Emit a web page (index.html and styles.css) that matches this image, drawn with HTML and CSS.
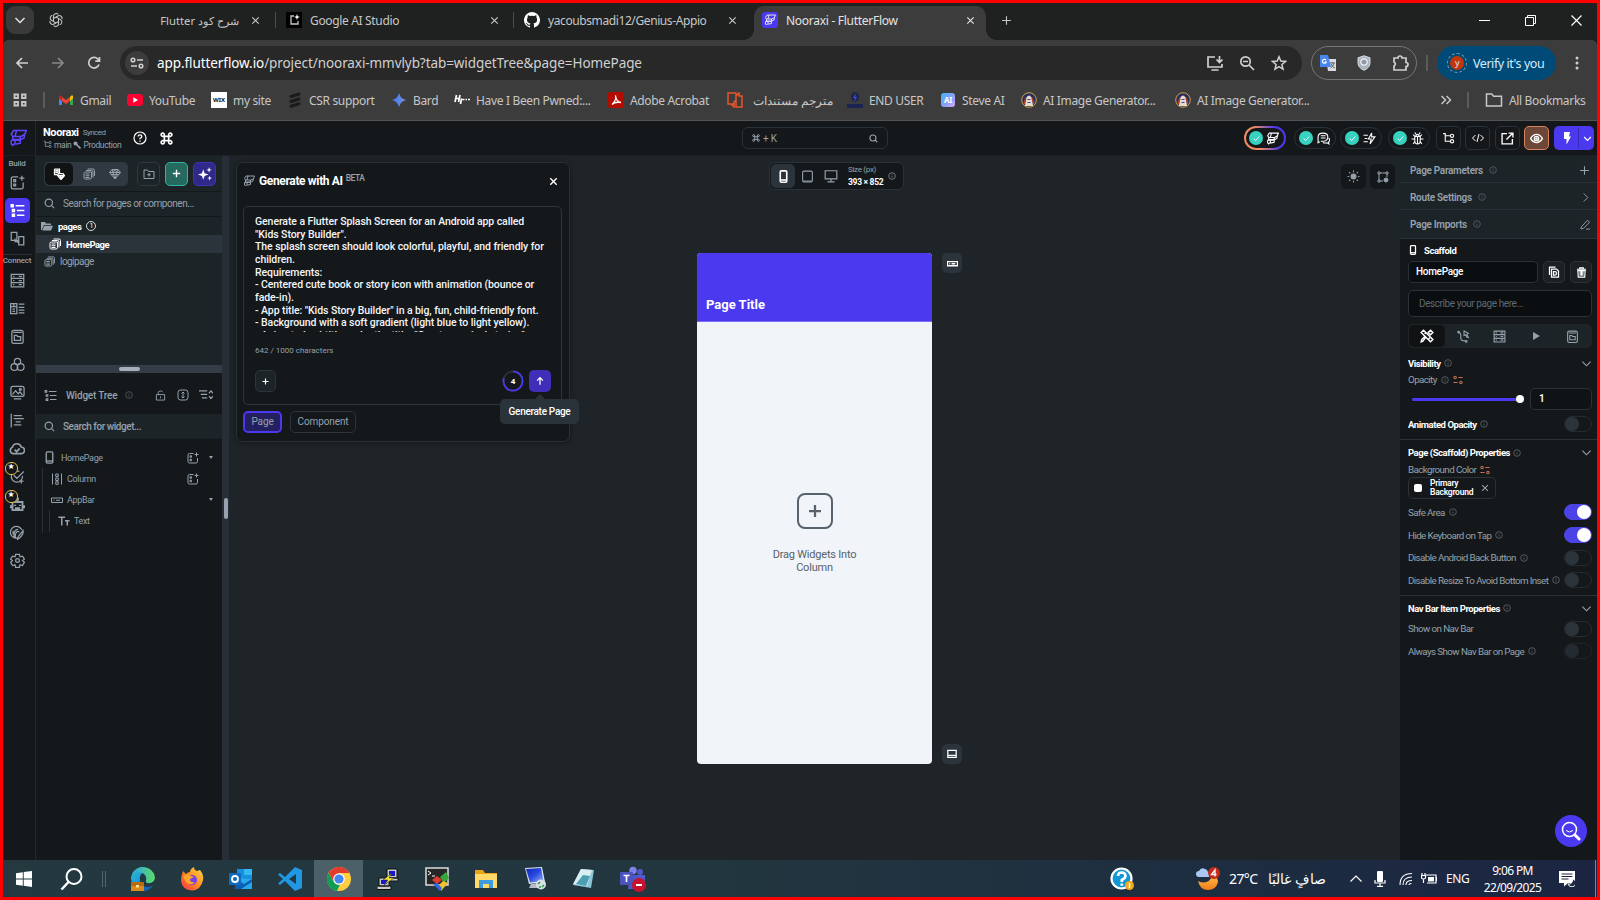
FILE: index.html
```html
<!DOCTYPE html>
<html lang="en">
<head>
<meta charset="utf-8">
<title>Nooraxi - FlutterFlow</title>
<link rel="stylesheet" href="styles.css">
</head>
<body>
<svg class="defs" width="0" height="0">
  <defs>
    <linearGradient id="gEdge" x1="0" y1="0" x2="1" y2="1"><stop offset="0" stop-color="#35c1b1"/><stop offset=".45" stop-color="#1b9de2"/><stop offset="1" stop-color="#0c59a4"/></linearGradient>
    <linearGradient id="gEdge2" x1="0" y1="0" x2="1" y2="0"><stop offset="0" stop-color="#2aa5e8"/><stop offset="1" stop-color="#5edb68"/></linearGradient>
    <linearGradient id="gFox" x1="1" y1="0" x2="0" y2="1"><stop offset="0" stop-color="#ffe14a"/><stop offset=".5" stop-color="#ff8a1e"/><stop offset="1" stop-color="#f0304f"/></linearGradient>
    <linearGradient id="gBard" x1="0" y1="0" x2="1" y2="0"><stop offset="0" stop-color="#3f7de8"/><stop offset="1" stop-color="#7d8ce0"/></linearGradient>
    <linearGradient id="gMoon" x1="0" y1="0" x2="0" y2="1"><stop offset="0" stop-color="#ffc445"/><stop offset="1" stop-color="#ee7a1c"/></linearGradient>
    <linearGradient id="gScreen" x1="0" y1="0" x2="1" y2="1"><stop offset="0" stop-color="#0d23b8"/><stop offset=".5" stop-color="#2a4be0"/><stop offset="1" stop-color="#9db8f5"/></linearGradient>
    <symbol id="close" viewBox="0 0 24 24"><path d="M5 5l14 14M19 5L5 19"/></symbol>
    <symbol id="plus" viewBox="0 0 24 24"><path d="M12 4v16M4 12h16"/></symbol>
    <symbol id="down" viewBox="0 0 24 24"><path d="M3 8l9 9 9-9"/></symbol>
    <symbol id="right" viewBox="0 0 24 24"><path d="M8 3l9 9-9 9"/></symbol>
    <symbol id="check" viewBox="0 0 24 24"><path d="M6 12.5l4 4L18 8"/></symbol>
    <symbol id="search" viewBox="0 0 24 24"><circle cx="10.500" cy="10.500" r="8"/><path d="M16 16l6 6"/></symbol>
    <symbol id="info" viewBox="0 0 24 24"><circle cx="12" cy="12" r="10"/><path d="M12 11v6M12 6.500v2"/></symbol>
    <symbol id="ff" viewBox="0 0 24 24"><path d="M3 7l3-5h17l-2 5-5 3H5zM5 10v4h11l4-2 1-5M3 15h12v4l-5 1H7M3 15v5l2 2 3-3v-4M10 2L8 10M15 10v4"/></symbol>
    <symbol id="branch" viewBox="0 0 24 24"><path d="M2 3h4v14h9M6 7h9"/><circle cx="18.500" cy="7" r="3"/><circle cx="18.500" cy="17" r="3"/></symbol>
    <symbol id="cmd" viewBox="0 0 24 24"><path d="M8 8h8v8H8zM8 8H5.500A3 3 0 1 1 8 5.500zM16 8V5.500A3 3 0 1 1 18.500 8zM16 16h2.500A3 3 0 1 1 16 18.500zM8 16v2.500A3 3 0 1 1 5.500 16z"/></symbol>
    <symbol id="pages" viewBox="0 0 24 24"><path d="M5 8h12v11q0 3-3 3H4q-2 0-2-3V11q0-3 3-3zM6 5h11q3 0 3 3v11M9 2h11q3 0 3 3v11M5 12h8M5 15.500h8M5 19h8"/></symbol>
    <symbol id="gem" viewBox="0 0 24 24"><path d="M6 3h12l5 6-11 13L1 9zM1 9h22M8 9l4 13 4-13M6 3l2 6 4-6 4 6 2-6M4 13h16"/></symbol>
    <symbol id="mix" viewBox="0 0 24 24"><path d="M3 2h10v8M3 2v11h6M6 5h4v4H6z"/><path d="M11 11h9l3 4-7 8-7-8zM9 15h14M14 15l2 7 3-7"/></symbol>
    <symbol id="folderp" viewBox="0 0 24 24"><path d="M2 4h7l2 3h11v14H2zM12 10v7M8.500 13.500h7"/></symbol>
    <symbol id="stars" viewBox="0 0 24 24"><path fill="currentColor" stroke="none" d="M9 4l2.300 6.700L18 13l-6.700 2.300L9 22l-2.300-6.700L0 13l6.700-2.300zM19 0l1.200 3.800L24 5l-3.800 1.200L19 10l-1.200-3.800L14 5l3.800-1.200zM20 15l1 3 3 1-3 1-1 4-1-4-3-1 3-1z"/></symbol>
    <symbol id="addw" viewBox="0 0 24 24"><path d="M13 3H5Q2 3 2 6v13q0 3 3 3h13q3 0 3-3v-7M19 1v8M15 5h8M6 7.500h3v3H6zM6 14.500h3v3H6z"/></symbol>
    <symbol id="tree" viewBox="0 0 24 24"><path d="M2 3h3v3H2zM4 10.500h3v3H4zM4 18h3v3H4zM9 4.500h14M11 12h12M11 19.500h12"/></symbol>
    <symbol id="story" viewBox="0 0 24 24"><path d="M2 2h9v13H2zM14 9h8v13h-8zM8 12v5h6M12 15l2 2-2 2"/></symbol>
    <symbol id="db" viewBox="0 0 24 24"><path d="M2 2h20v20H2zM2 8.500h20M2 15.500h20M5 5.300h2M14 5.300h5M5 12h2M14 12h5M5 18.700h2M14 18.700h5"/></symbol>
    <symbol id="types" viewBox="0 0 24 24"><path d="M1 4h10v16H1zM1 9h10M6 4v5M4 13h4M4 16.500h4M14 5h9M14 10h9M14 14.500h9M14 19h9"/></symbol>
    <symbol id="card" viewBox="0 0 24 24"><rect x="3" y="2" width="18" height="21" rx="3"/><path d="M5 5.500h14M7 10h4l1 2h5v6H7z"/></symbol>
    <symbol id="rings" viewBox="0 0 24 24"><circle cx="12" cy="7" r="5"/><circle cx="7" cy="16" r="5.500"/><circle cx="17" cy="16" r="5.500"/></symbol>
    <symbol id="media" viewBox="0 0 24 24"><rect x="1.500" y="2" width="21" height="16" rx="3"/><path d="M4 15l5-6 4 5 3-3 4 5M6 22h12"/><circle cx="16.500" cy="7" r="1.500"/></symbol>
    <symbol id="chartrows" viewBox="0 0 24 24"><path d="M2 1v22M6 4h13M6 9h16M9 14h8M6 19h12"/></symbol>
    <symbol id="cloud" viewBox="0 0 24 24"><path d="M6 19a5 5 0 0 1-1-9.500A7 7 0 0 1 18.500 9 5 5 0 0 1 18 19zM8.500 13l3 3 4.500-5"/></symbol>
    <symbol id="tests" viewBox="0 0 24 24"><path d="M20 11a9 9 0 1 1-5-7M6 10l5 5L22 4M18 16v7M14.500 19.500h7"/></symbol>
    <symbol id="robot" viewBox="0 0 24 24"><path d="M4 8h16v13H4zM1 13v5M23 13v5M12 8V3M8 12.500v2M16 12.500v2M8 18h8"/><circle cx="12" cy="3" r="1"/></symbol>
    <symbol id="palette" viewBox="0 0 24 24"><path d="M12 21a9.500 9.500 0 1 1 7-13M8 21c-3-4-2-14 5-14M9 21c-2-9 3-12 6-10M12 23c-1-5 5-8 9-14 1 5-4 12-9 14zM5 9v6"/></symbol>
    <symbol id="gear" viewBox="0 0 24 24"><path d="M9 2h6l1 4 4-1 3 5-3 2 3 3-3 5-4-1-1 4H9l-1-4-4 1-3-5 3-3-3-2 3-5 4 1z"/><circle cx="12" cy="12" r="3"/></symbol>
    <symbol id="phone" viewBox="0 0 24 24"><rect x="6" y="1.500" width="12" height="21" rx="2"/><path d="M6 18.500h12" /></symbol>
    <symbol id="column" viewBox="0 0 24 24"><path d="M3 1v22M21 1v22M9.500 2h5v5h-5zM9.500 10h5v5h-5zM9.500 17.500h5v5h-5z"/></symbol>
    <symbol id="appbar" viewBox="0 0 24 24"><path d="M1 8h22v9H1zM5 12.500h2M10 12.500h8"/></symbol>
    <symbol id="tt" viewBox="0 0 24 24"><path stroke-width="3" d="M1 4.500h13M7.500 4.500V21M14 11.500h9M18.500 11.500V21"/></symbol>
    <symbol id="lock" viewBox="0 0 24 24"><path d="M3 10h18v12H3zM7 10V6q0-4 5-4 4 0 5 3M12 14v4"/></symbol>
    <symbol id="expand" viewBox="0 0 24 24"><rect x="2" y="2" width="20" height="20" rx="5"/><path d="M12 6v12M9 9l3-3 3 3M9 15l3 3 3-3"/></symbol>
    <symbol id="sort" viewBox="0 0 24 24"><path d="M0 5h14M3 11h11M5 17h9M17 9l3.500-4L24 9M17 14l3.500 4 3.500-4"/></symbol>
    <symbol id="up" viewBox="0 0 24 24"><path d="M12 21V4M5 11l7-7 7 7"/></symbol>
    <symbol id="tablet" viewBox="0 0 24 24"><rect x="3" y="2" width="18" height="20" rx="2.500"/><path d="M4 20.500h16"/></symbol>
    <symbol id="monitor" viewBox="0 0 24 24"><path d="M2 3h20v14H2zM12 17v4M6 22h12"/></symbol>
    <symbol id="sun" viewBox="0 0 24 24"><circle cx="12" cy="12" r="4.500" fill="currentColor"/><path d="M12 1v3M12 20v3M1 12h3M20 12h3M4 4l2 2M18 18l2 2M20 4l-2 2M6 18l-2 2"/></symbol>
    <symbol id="frame" viewBox="0 0 24 24"><path d="M4 6v12M6 4h12M20 6v6M6 20h6M2 2h4v4H2zM18 2h4v4h-4zM2 18h4v4H2z"/><circle cx="18" cy="18" r="4" fill="currentColor"/></symbol>
    <symbol id="chat" viewBox="0 0 24 24"><path d="M5 18l-3 2V9q0-7 9-7t9 7-8 8H7M7 7h9M7 11h9M22 11q3 6-1 8l1 3-4-2q-5 1-7-1"/></symbol>
    <symbol id="flow" viewBox="0 0 24 24"><path d="M16 2l-6 11h5l-2 9 9-13h-6zM1 6h8M3 12h5M1 18h8"/></symbol>
    <symbol id="bug" viewBox="0 0 24 24"><path d="M7 8h10v8a5 6 0 0 1-10 0zM9 8q0-4 3-4t3 4M12 8v14M7 8L4 5M17 8l3-3M7 13H1M17 13h6M7 18l-3 4M17 18l3 4M9 4L7 1M15 4l2-3"/></symbol>
    <symbol id="code" viewBox="0 0 24 24"><path d="M7 6l-6 6 6 6M17 6l6 6-6 6M14 4l-4 16"/></symbol>
    <symbol id="open" viewBox="0 0 24 24"><path d="M11 3H2v19h19v-9M14 2h8v8M22 2L10 14"/></symbol>
    <symbol id="eye" viewBox="0 0 24 24"><path d="M1 12Q6 4.500 12 4.500T23 12q-5 7.500-11 7.500T1 12z"/><circle cx="12" cy="12" r="4"/><circle cx="12" cy="12" r="1"/></symbol>
    <symbol id="pen" viewBox="0 0 24 24"><path d="M3 17L16 3l5 4L8 20l-6 2zM13 22h9"/></symbol>
    <symbol id="copy" viewBox="0 0 24 24"><path d="M7 6h10l4 4v12H7zM3 18V2h12M11 11h3q3 0 3 3.500T14 18h-3z"/></symbol>
    <symbol id="trash" viewBox="0 0 24 24"><path d="M2 5h20M8 5V2h8v3M4 8l1 14h14l1-14zM9 9v10M12 9v10M15 9v10"/></symbol>
    <symbol id="tools" viewBox="0 0 24 24"><path d="M6 2l16 16-4 4L2 6zM18 2l4 4-4 4-4-4zM10 14l-5 7-3 1 1-4 6-6M8 8l2-2M15 17l2-2"/></symbol>
    <symbol id="actions" viewBox="0 0 24 24"><path d="M3 4q3 0 4 5v6q0 5 8 5M13 2l8 4-3 2 3 6-3-1-2-4-3 1z"/><circle cx="3" cy="4" r="1.500"/><circle cx="17" cy="21" r="1.500"/></symbol>
    <symbol id="vars" viewBox="0 0 24 24"><circle cx="5" cy="6" r="3"/><circle cx="19" cy="18" r="3"/><path d="M13 6h10M1 18h10"/></symbol>
    <symbol id="folder" viewBox="0 0 24 24"><path d="M2 4h7l2.500 3H22v13H2z"/></symbol>
  </defs>
</svg>

<header class="tabs">
  <span class="tabmenu"><svg class="ic s12 w3"><use href="#down"/></svg></span>
  <div class="tab t1">
    <svg class="ic s16" viewBox="0 0 24 24"><g stroke-width="1.600"><path id="petal" d="M8.200 14.200V6.500a4.200 4.200 0 0 1 7.300-2.800"/><use href="#petal" transform="rotate(60 12 12)"/><use href="#petal" transform="rotate(120 12 12)"/><use href="#petal" transform="rotate(180 12 12)"/><use href="#petal" transform="rotate(240 12 12)"/><use href="#petal" transform="rotate(300 12 12)"/></g></svg>
    <span class="ttl" dir="rtl">شرح كود Flutter</span><svg class="ic s11 w25"><use href="#close"/></svg>
  </div>
  <div class="tab t2">
    <svg class="ic s16" viewBox="0 0 16 16"><path fill="#000" stroke="none" d="M0 0h16v16H0z"/><path stroke-width="1.300" d="M8 4H5v8h7V9"/><path fill="#fff" stroke="none" d="M11 2l.8 2.200L14 5l-2.200.8L11 8l-.8-2.200L8 5l2.200-.8z"/></svg>
    <span class="ttl">Google AI Studio</span><svg class="ic s11 w25"><use href="#close"/></svg>
  </div>
  <div class="tab t3">
    <svg class="ic s16" viewBox="0 0 16 16"><path fill="#fff" stroke="none" d="M8 0a8 8 0 0 0-2.500 15.600c.4 0 .5-.2.500-.4v-1.500c-2 .5-2.700-.5-2.900-1-.1-.3-.6-1-1-1.200-.3-.2-.8-.6 0-.6s1.200.6 1.400.9c.8 1.400 2 1 2.500.8 0-.6.300-1 .6-1.200C4.800 11.200 3 10.500 3 7.500c0-1 .3-1.600.8-2.200-.1-.2-.4-1 .1-2.100 0 0 .7-.2 2.200.8a7.500 7.500 0 0 1 4 0c1.500-1 2.200-.8 2.200-.8.4 1.100.1 1.900 0 2.100.5.600.8 1.300.8 2.200 0 3-1.800 3.700-3.600 3.900.3.300.5.800.5 1.500v2.300c0 .2.100.4.500.4A8 8 0 0 0 8 0z"/></svg>
    <span class="ttl">yacoubsmadi12/Genius-Appio</span><svg class="ic s11 w25"><use href="#close"/></svg>
  </div>
  <div class="tab active">
    <span class="ffbadge"><svg class="ic s12"><use href="#ff"/></svg></span>
    <span class="ttl">Nooraxi - FlutterFlow</span><svg class="ic s11 w25"><use href="#close"/></svg>
  </div>
  <span class="newtab"><svg class="ic s13"><use href="#plus"/></svg></span>
  <div class="winctl">
    <svg class="ic" width="11" height="11" viewBox="0 0 11 11"><path stroke-width="1" d="M0 5.500h11"/></svg>
    <svg class="ic" width="11" height="11" viewBox="0 0 11 11"><path stroke-width="1" d="M.5 2.500h8v8h-8zM2.500 2.500v-2h8v8h-2"/></svg>
    <svg class="ic" width="11" height="11" viewBox="0 0 11 11"><path stroke-width="1.200" d="M.5.5l10 10M10.500.5l-10 10"/></svg>
  </div>
</header>

<div class="toolbar">
  <svg class="ic s16" viewBox="0 0 16 16"><path stroke-width="1.700" d="M14 8H3M8 3L3 8l5 5"/></svg>
  <svg class="ic s16 dim" viewBox="0 0 16 16"><path stroke-width="1.700" d="M2 8h11M8 3l5 5-5 5"/></svg>
  <svg class="ic s16" viewBox="0 0 16 16"><path stroke-width="1.700" d="M13 9.500A5.300 5.300 0 1 1 11.800 4L13.500 6M13.500 2v4.200H9.300"/></svg>
  <div class="omni">
    <span class="site"><svg class="ic s14" viewBox="0 0 14 14"><path stroke-width="1.500" d="M7 4h6M1 10h6"/><circle cx="3" cy="4" r="1.800" stroke-width="1.500"/><circle cx="11" cy="10" r="1.800" stroke-width="1.500"/></svg></span>
    <span class="url"><b>app.flutterflow.io</b>/project/nooraxi-mmvlyb?tab=widgetTree&amp;page=HomePage</span>
    <svg class="ic s18" viewBox="0 0 18 18"><path stroke-width="1.700" d="M9 3H2v10h14v-3M5.500 16h7M13.500 2v6M10.500 5.500l3 3 3-3"/></svg>
    <svg class="ic s16" viewBox="0 0 16 16"><path stroke-width="1.700" d="M10 10l5 5M4 6.500h5"/><circle cx="6.500" cy="6.500" r="4.700" stroke-width="1.700"/></svg>
    <svg class="ic s16" viewBox="0 0 16 16"><path stroke-width="1.500" d="M8 1.800l1.800 4.300 4.700.4-3.600 3 1.100 4.600L8 11.600l-4 2.500 1.100-4.600-3.600-3 4.700-.4z"/></svg>
  </div>
  <div class="exts">
    <svg class="s16" viewBox="0 0 16 16"><path fill="#dadce0" d="M6 4h10v12H8z"/><path fill="#4a86f0" d="M0 0h8l3 12H0z"/><path stroke="#5f6368" fill="none" d="M10 8h5M12.500 7v1M14 8q-1 4-3.500 5M11 9q1 3 4 4"/><path fill="none" stroke="#fff" stroke-width="1.200" d="M6 5a2 2 0 1 0 .3 2H4.500"/></svg>
    <svg class="s16" viewBox="0 0 16 16"><path fill="#aab4bf" stroke="#d5dbe1" d="M8 .8l6 2v5q0 5-6 7.500Q2 12.800 2 7.800v-5z"/><circle cx="8" cy="7" r="3.200" fill="#8e9aa8" stroke="#f1f3f4" stroke-width="1.200"/></svg>
    <svg class="ic s18" viewBox="0 0 18 18"><path stroke-width="1.700" d="M3 4h4a2 2 0 1 1 4 0h4v4.500a2 2 0 1 1 0 4V16H3v-4a2.200 2.200 0 0 0 0-4z"/></svg>
  </div>
  <span class="vdiv"></span>
  <div class="verify"><span class="ava">y</span><span>Verify it's you</span></div>
  <svg class="s16 dots" viewBox="0 0 16 16"><circle cx="8" cy="3" r="1.500"/><circle cx="8" cy="8" r="1.500"/><circle cx="8" cy="13" r="1.500"/></svg>
</div>

<nav class="marks">
  <svg class="ic s14" viewBox="0 0 14 14"><path stroke-width="1.800" d="M1.500 1.500h3.500v3.500H1.500zM9 1.500h3.500v3.500H9zM1.500 9h3.500v3.500H1.500zM9 9h3.500v3.500H9z"/></svg>
  <span class="vdiv"></span>
  <a class="bm"><svg class="s16" viewBox="0 0 16 16"><path fill="#4285f4" d="M1 4v9h3V7z"/><path fill="#34a853" d="M12 7v6h3V4z"/><path fill="#fbbc04" d="M12 5v4l3-2.500V4q-1-2-3 1z"/><path fill="#ea4335" d="M4 5l4 3 4-3v4l-4 3-4-3z"/><path fill="#c5221f" d="M1 4v2.500L4 9V5Q2 2 1 4z"/></svg>Gmail</a>
  <a class="bm"><svg class="s16" viewBox="0 0 16 16"><rect y="2" width="16" height="12" rx="3" fill="#f03"/><path fill="#fff" d="M6.300 5.300v5.400L11 8z"/></svg>YouTube</a>
  <a class="bm"><span class="wix">WIX</span>my site</a>
  <a class="bm"><svg class="s16" viewBox="0 0 16 16"><path stroke="#1b1b1b" stroke-width="3" stroke-linecap="round" d="M4 4.500l8-2.500M4 9.500L12 7M4 14.300l8-2.500"/></svg>CSR support</a>
  <a class="bm"><svg class="s16" viewBox="0 0 16 16"><path fill="url(#gBard)" d="M8 1q1.300 5.700 7 7-5.700 1.300-7 7-1.300-5.700-7-7 5.700-1.300 7-7z"/></svg>Bard</a>
  <a class="bm"><svg class="s16" viewBox="0 0 16 16"><path fill="none" stroke="#fff" stroke-width="1.700" d="M2.500 3L1 10M6 3L4.500 10M2 6.500h4M7.500 6.500L6.500 12M8 7.500h2.500M11.500 7.500H13M14 7.500h2"/></svg>Have I Been Pwned:...</a>
  <a class="bm"><svg class="s16" viewBox="0 0 16 16"><rect width="16" height="16" rx="2" fill="#b30b00"/><path fill="none" stroke="#fff" stroke-width="1.300" d="M7.500 3.500q1.500 4-3.500 9 3-3 9-2-5-1-5.500-7z"/></svg>Adobe Acrobat</a>
  <a class="bm wide"><svg class="s16" viewBox="0 0 16 16"><path fill="none" stroke="#e8542a" stroke-width="1.500" d="M7 12H1V1h8v7L7 10v5l-3-3M9 4l3-3v3h3v11H9V8"/></svg><span dir="rtl">مترجم مستندات</span></a>
  <a class="bm"><svg class="s16" viewBox="0 0 16 16"><path fill="#1d2350" d="M0 12h16v4H0z"/><ellipse cx="8" cy="5" rx="4" ry="5" fill="#23244a"/><path fill="#3d52e8" d="M9 1L6 6h2l-1 4 3-5H8z"/></svg>END USER</a>
  <a class="bm"><span class="steve">AI</span>Steve AI</a>
  <a class="bm"><svg class="s16 robo" viewBox="0 0 16 16"><circle cx="8" cy="8" r="7.300" fill="#2c2f5e" stroke="#c8a24a"/><path fill="#e8dcc8" d="M5 6q3-5 6 0l1 8H4z"/><path stroke="#b3422e" stroke-width="1.500" d="M3 12l2-6M13 12l-2-6"/><path stroke="#2e4fa0" d="M6.500 7.500h3M6.500 10.500h3"/></svg>AI Image Generator...</a>
  <a class="bm"><svg class="s16 robo" viewBox="0 0 16 16"><circle cx="8" cy="8" r="7.300" fill="#2c2f5e" stroke="#c8a24a"/><path fill="#e8dcc8" d="M5 6q3-5 6 0l1 8H4z"/><path stroke="#b3422e" stroke-width="1.500" d="M3 12l2-6M13 12l-2-6"/><path stroke="#2e4fa0" d="M6.500 7.500h3M6.500 10.500h3"/></svg>AI Image Generator...</a>
  <svg class="ic s12" viewBox="0 0 12 12"><path stroke-width="1.500" d="M1.500 2l4 4-4 4M6.500 2l4 4-4 4"/></svg>
  <span class="vdiv"></span>
  <a class="bm allb"><svg class="ic s18 w2"><use href="#folder"/></svg>All Bookmarks</a>
</nav>

<div class="app">
  <header class="top">
    <span class="logo"><svg class="ic s18"><use href="#ff"/></svg></span>
    <div class="proj">
      <div class="p1"><b>Nooraxi</b><span>Synced</span></div>
      <div class="p2"><svg class="ic s9"><use href="#branch"/></svg><span>main</span><svg class="s8" viewBox="0 0 8 8"><path stroke="#95a1ac" stroke-width="1.600" d="M3 3l4.500 4.500"/><circle cx="2.500" cy="2.500" r="2" fill="#95a1ac"/></svg><span>Production</span></div>
    </div>
    <svg class="ic s14 q" viewBox="0 0 14 14"><circle cx="7" cy="7" r="6" stroke-width="1.200"/><path stroke-width="1.300" d="M5.200 5.500q0-1.700 1.800-1.700t1.800 1.600Q8.800 6.500 7 7.300v1M7 9.500v1.200"/></svg>
    <svg class="ic s13 k w3"><use href="#cmd"/></svg>
    <div class="cmdk"><svg class="ic s8 w3"><use href="#cmd"/></svg><span>+ K</span><svg class="ic s9 w3 m"><use href="#search"/></svg></div>
    <div class="acts">
      <span class="pill grad"><i><svg class="ic s11"><use href="#check"/></svg></i><svg class="ic s13"><use href="#ff"/></svg></span>
      <span class="pill"><i><svg class="ic s11"><use href="#check"/></svg></i><svg class="ic s13"><use href="#chat"/></svg></span>
      <span class="pill"><i><svg class="ic s11"><use href="#check"/></svg></i><svg class="ic s13"><use href="#flow"/></svg></span>
      <span class="pill"><i><svg class="ic s11"><use href="#check"/></svg></i><svg class="ic s13"><use href="#bug"/></svg></span>
      <span class="sq"><svg class="ic s13"><use href="#branch"/></svg></span>
      <span class="sq"><svg class="ic s12"><use href="#code"/></svg></span>
      <span class="sq"><svg class="ic s13 w25"><use href="#open"/></svg></span>
      <span class="sq brown"><svg class="ic s13 w25"><use href="#eye"/></svg></span>
      <span class="run"><svg class="s14" viewBox="0 0 14 14"><path fill="#fff" d="M4 1h6L9 5.500h2L6.500 13.500V8H4z"/></svg><em></em><svg class="ic s9 w3"><use href="#down"/></svg></span>
    </div>
  </header>

  <div class="work">
    <aside class="rail">
      <small>Build</small>
      <span><svg class="ic s15"><use href="#addw"/></svg></span>
      <span class="on"><svg class="ic s15 w25"><use href="#tree"/></svg></span>
      <span><svg class="ic s15"><use href="#story"/></svg></span>
      <small class="con">Connect</small>
      <span><svg class="ic s15"><use href="#db"/></svg></span>
      <span><svg class="ic s15"><use href="#types"/></svg></span>
      <span><svg class="ic s15"><use href="#card"/></svg></span>
      <span><svg class="ic s15"><use href="#rings"/></svg></span>
      <span><svg class="ic s15"><use href="#media"/></svg></span>
      <span><svg class="ic s15"><use href="#chartrows"/></svg></span>
      <span><svg class="ic s16 w25"><use href="#cloud"/></svg></span>
      <span class="star"><svg class="ic s15"><use href="#tests"/></svg></span>
      <span class="star"><svg class="ic s15 w3"><use href="#robot"/></svg></span>
      <span><svg class="ic s15"><use href="#palette"/></svg></span>
      <span><svg class="ic s15"><use href="#gear"/></svg></span>
    </aside>

    <aside class="left">
      <div class="ptools">
        <div class="seg"><span class="on"><svg class="ic s12 w25"><use href="#mix"/></svg></span><span><svg class="ic s12"><use href="#pages"/></svg></span><span><svg class="ic s12"><use href="#gem"/></svg></span></div>
        <span class="bt"><svg class="ic s12"><use href="#folderp"/></svg></span>
        <span class="bt green"><svg class="ic s11 w3"><use href="#plus"/></svg></span>
        <span class="bt violet"><svg class="ic s14"><use href="#stars"/></svg></span>
      </div>
      <div class="find"><svg class="ic s11 w25"><use href="#search"/></svg><span>Search for pages or componen...</span></div>
      <div class="pagelist">
        <div class="prow grp"><svg class="s12" viewBox="0 0 12 12"><path fill="#95a1ac" d="M0 2h4l1 1.500h5V5H3L.8 10H0zM3.300 5.700H12L10 10.500H1.300z"/></svg><b>pages</b><span class="cnt">1</span></div>
        <div class="prow sel"><svg class="ic s12"><use href="#pages"/></svg><b>HomePage</b></div>
        <div class="prow"><svg class="ic s11"><use href="#pages"/></svg><span>logipage</span></div>
      </div>
      <div class="hbar"><i></i></div>
      <div class="wthead"><svg class="ic s13"><use href="#tree"/></svg><span>Widget Tree</span><svg class="ic s8 info"><use href="#info"/></svg><svg class="ic s11"><use href="#lock"/></svg><svg class="ic s12"><use href="#expand"/></svg><svg class="ic s14"><use href="#sort"/></svg></div>
      <div class="find w"><svg class="ic s11 w25"><use href="#search"/></svg><span>Search for widget...</span></div>
      <div class="tree">
        <div class="r0"><svg class="ic s13 w25"><use href="#phone"/></svg><span>HomePage</span><svg class="ic s12"><use href="#addw"/></svg><u></u></div>
        <div class="kids">
          <div class="r1"><svg class="ic s12"><use href="#column"/></svg><span>Column</span><svg class="ic s12"><use href="#addw"/></svg></div>
          <div class="r1"><svg class="ic s12"><use href="#appbar"/></svg><span>AppBar</span><i></i><u></u></div>
          <div class="r2"><svg class="ic s12"><use href="#tt"/></svg><span>Text</span></div>
        </div>
      </div>
    </aside>
    <div class="vbar"><i></i></div>

    <main class="canvas">
      <section class="ai">
        <div class="aih"><svg class="ic s12"><use href="#ff"/></svg><b>Generate with AI</b><sup>BETA</sup><svg class="ic s11 w3"><use href="#close"/></svg></div>
        <div class="box">
          <div class="prompt">Generate a Flutter Splash Screen for an Android app called<br>"Kids Story Builder".<br>The splash screen should look colorful, playful, and friendly for<br>children.<br>Requirements:<br>- Centered cute book or story icon with animation (bounce or<br>fade-in).<br>- App title: "Kids Story Builder" in a big, fun, child-friendly font.<br>- Background with a soft gradient (light blue to light yellow).<br>- Animated subtitle under the title: "Create magical stories"</div>
          <div class="chars">642 / 1000 characters</div>
          <div class="brow"><span class="add"><svg class="ic s9 w3"><use href="#plus"/></svg></span><span class="ring"><svg viewBox="0 0 22 22" width="22" height="22"><circle cx="11" cy="11" r="9.600" fill="none" stroke="#2a323a" stroke-width="1.800"/><circle cx="11" cy="11" r="9.600" fill="none" stroke="#4b39ef" stroke-width="1.800" stroke-dasharray="48 20" transform="rotate(-90 11 11)"/><text x="11" y="14" text-anchor="middle">4</text></svg></span><span class="send"><svg class="ic s10 w3"><use href="#up"/></svg></span></div>
        </div>
        <div class="kinds"><span class="on">Page</span><span>Component</span></div>
        <div class="tip">Generate Page</div>
      </section>

      <section class="stage">
        <div class="device"><span class="on"><svg class="ic s13 w3"><use href="#phone"/></svg></span><span><svg class="ic s13"><use href="#tablet"/></svg></span><span><svg class="ic s14"><use href="#monitor"/></svg></span><div><small>Size (px)</small><b>393 × 852</b></div><svg class="ic s8"><use href="#info"/></svg></div>
        <div class="mock">
          <div class="screen">
            <div class="bar">Page Title</div>
            <div class="drop"><span><svg class="ic s18 w3"><use href="#plus"/></svg></span><p>Drag Widgets Into<br>Column</p></div>
          </div>
          <div class="side"><span><svg class="ic s11 w3"><use href="#appbar"/></svg></span><span><svg class="ic s10 w3" viewBox="0 0 24 24"><path d="M2 3h20v17H2zM2 15h20"/></svg></span></div>
        </div>
      </section>

      <div class="corner"><span><svg class="ic s13"><use href="#sun"/></svg></span><span><svg class="ic s12"><use href="#frame"/></svg></span></div>
    </main>

    <aside class="right">
      <div class="srow"><span>Page Parameters</span><svg class="ic s8"><use href="#info"/></svg><svg class="ic s13 e"><use href="#plus"/></svg></div>
      <div class="srow"><span>Route Settings</span><svg class="ic s8"><use href="#info"/></svg><svg class="ic s11 e"><use href="#right"/></svg></div>
      <div class="srow"><span>Page Imports</span><svg class="ic s8"><use href="#info"/></svg><svg class="ic s11 e"><use href="#pen"/></svg></div>
      <div class="props">
        <div class="scaf"><svg class="ic s10 w3"><use href="#phone"/></svg><b>Scaffold</b></div>
        <div class="name"><span>HomePage</span><i><svg class="ic s12 w25"><use href="#copy"/></svg></i><i><svg class="ic s11 w25"><use href="#trash"/></svg></i></div>
        <div class="desc">Describe your page here...</div>
        <div class="ptabs"><span class="on"><svg class="ic s14 w25"><use href="#tools"/></svg></span><span><svg class="ic s13"><use href="#actions"/></svg></span><span><svg class="ic s13"><use href="#db"/></svg></span><span><svg class="s10" viewBox="0 0 10 10"><path fill="#95a1ac" d="M2 1l7 4-7 4z"/></svg></span><span><svg class="ic s13"><use href="#card"/></svg></span></div>
        <div class="h vis"><b>Visibility</b><svg class="ic s8 inf"><use href="#info"/></svg><svg class="ic s11 w25 e"><use href="#down"/></svg></div>
        <div class="l op"><span>Opacity</span><svg class="ic s8 inf"><use href="#info"/></svg><svg class="ic s10 or w25"><use href="#vars"/></svg></div>
        <div class="slide"><em><i></i></em><span>1</span></div>
        <div class="h anim"><b>Animated Opacity</b><svg class="ic s8 inf"><use href="#info"/></svg><u></u></div>
        <hr>
        <div class="h pg"><b>Page (Scaffold) Properties</b><svg class="ic s8 inf"><use href="#info"/></svg><svg class="ic s11 w25 e"><use href="#down"/></svg></div>
        <div class="l bg"><span>Background Color</span><svg class="ic s10 or w25"><use href="#vars"/></svg></div>
        <div class="chip"><i></i><b>Primary<br>Background</b><svg class="ic s10 w25"><use href="#close"/></svg></div>
        <div class="t"><span>Safe Area</span><svg class="ic s8 inf"><use href="#info"/></svg><u class="on"></u></div>
        <div class="t"><span>Hide Keyboard on Tap</span><svg class="ic s8 inf"><use href="#info"/></svg><u class="on"></u></div>
        <div class="t"><span>Disable Android Back Button</span><svg class="ic s8 inf"><use href="#info"/></svg><u></u></div>
        <div class="t"><span>Disable Resize To Avoid Bottom Inset</span><svg class="ic s8 inf"><use href="#info"/></svg><u></u></div>
        <hr class="h2">
        <div class="h nav"><b>Nav Bar Item Properties</b><svg class="ic s8 inf"><use href="#info"/></svg><svg class="ic s11 w25 e"><use href="#down"/></svg></div>
        <div class="t"><span>Show on Nav Bar</span><u></u></div>
        <div class="t"><span>Always Show Nav Bar on Page</span><svg class="ic s8 inf"><use href="#info"/></svg><u class="off"></u></div>
      </div>
      <span class="fab"><svg class="ic s20" viewBox="0 0 20 20"><circle cx="8.500" cy="8.500" r="7" stroke-width="1.500"/><path stroke-width="1" d="M5 9.500q3.500 3 7 0"/><path stroke-width="3" stroke-linecap="round" d="M14 14l4 4"/></svg></span>
    </aside>
  </div>
</div>

<footer class="task">
  <span><svg class="s16" viewBox="0 0 16 16"><path fill="#fff" d="M0 2.200l6.800-1v6.300H0zM7.700 1.100L16 0v7.500H7.700zM0 8.400h6.800v6.300L0 13.800zM7.700 8.400H16V16l-8.300-1.200z"/></svg></span>
  <span><svg class="ic s24" viewBox="0 0 24 24"><circle cx="14" cy="9.500" r="7.500"/><path stroke-width="2.500" d="M8.500 15L1.500 22.500"/></svg></span>
  <span class="grip"></span>
  <span><svg class="s24" viewBox="0 0 24 24"><path fill="url(#gEdge)" d="M0 12A12 12 0 0 1 12 0q9 1 11 10-3-6-10-5-5 2-4 9 1 6 8 9H11Q1 22 0 12z"/><path fill="url(#gEdge2)" d="M1 7Q5 0 12 0q11 1 12 11-1 6-8 5-2-1-1-3 1-3-2-6Q7 3 1 7z"/><path fill="#1565b5" d="M9 12q0 8 8 8 3 0 5-2-3 6-10 6-5-4-3-12z"/><path fill="#d88a1e" d="M0 15h13v9H0z"/><path fill="#b76b10" d="M0 15h13v4H0z"/><path fill="#ffe28a" d="M5 18h3v2.500H5z"/></svg></span>
  <span><svg class="s24" viewBox="0 0 24 24"><path fill="url(#gFox)" d="M2 7l1-3 3 3q2-2 4-2 0-3 4-5 0 3 3 4l3-1q4 5 3 10-2 10-11 10.500Q2 23 1 14q0-4 1-7z"/><circle cx="12" cy="13" r="5" fill="#7542e5"/><path fill="#ffa62b" d="M3 9q4-3 8 0l3 1-4 2q0 4 5 3-3 4-8 1-3-3-4-7z"/></svg></span>
  <span><svg class="s24" viewBox="0 0 24 24"><path fill="#1490df" d="M8 2h15v12H8z"/><path fill="#35b8f1" d="M15 2h8v6h-8z"/><path fill="#28a8ea" d="M6 22V11l17 1v10z"/><path fill="#0a5fb4" d="M6 11l9 6 8-5v3l-11 7H6z"/><rect y="6" width="12" height="12" rx="1" fill="#0f6cbd"/><circle cx="6" cy="12" r="3" fill="none" stroke="#fff" stroke-width="1.800"/></svg></span>
  <span><svg class="s24" viewBox="0 0 24 24"><path fill="#2196e3" d="M17 0l7 3v18l-7 3L7 14l-5 4-2-1.500L5 12 0 7.500 2 6l5 4zM18 7l-7 5 7 5z" fill-rule="evenodd"/></svg></span>
  <span class="cur"><svg class="s24" viewBox="0 0 24 24"><circle cx="12" cy="12" r="12" fill="#ffcd40"/><path fill="#e33b2e" d="M1.600 6A12 12 0 0 1 22.400 6H12l-5.200 9z"/><path fill="#0f9d58" d="M1.600 6l5.200 9q2 3 6 3l-3 6A12 12 0 0 1 1.600 6z"/><circle cx="12" cy="12" r="5.800" fill="#fff"/><circle cx="12" cy="12" r="4.600" fill="#4285f4"/></svg></span>
  <span><svg class="s22" viewBox="0 0 22 22"><path fill="#c9c9c9" stroke="#111" d="M10 1h10v9H10zM2 10h10v8H2zM8 10h13v3H8zM0 18h14v3.500H0z"/><path fill="#1717c8" d="M12 3h6v5h-6zM4 12h6v4H4z"/><path fill="#f5e93a" stroke="#222" stroke-width=".5" d="M15 5L6 12h5l-4 5 10-7h-5z"/></svg></span>
  <span><svg class="s24" viewBox="0 0 24 24"><path fill="#262626" stroke="#ddd" stroke-width="1.500" d="M1 1h22v17H1z"/><path stroke="#fff" fill="none" d="M3 4l3 2-3 2M7 9h3"/><path fill="#e23b2e" d="M7 13l5-4 5 4-5 4z"/><path fill="#36a53a" d="M15 10l6-5 3 6-5 5z"/><path fill="#f0c52c" d="M14 18l4-4 5 2-7 8z"/><path fill="#3567e0" d="M8 17l4-1 5 5-2 3z"/></svg></span>
  <span><svg class="s22" viewBox="0 0 22 22"><path fill="#e8a617" d="M0 2h8l2 3h12v5H0z"/><path fill="#ffd969" d="M0 6h22v14H0z"/><path fill="#3d9be0" d="M4 20v-8h14v8h-4v-4H8v4z"/></svg></span>
  <span><svg class="s24" viewBox="0 0 24 24"><path fill="#dfe6ee" d="M2 1l17-1 3 15-16 2z"/><path fill="url(#gScreen)" d="M3 2l15-1 2.500 13L7 15.500z"/><path fill="#b5bdc8" d="M8 17l8-1 3 5H6z"/><circle cx="18" cy="17.500" r="5" fill="#d9e0e8"/><path stroke="#2a9b3c" stroke-width="1.500" fill="none" d="M15 17l2-2M19 20l2-2M16 20h2"/></svg></span>
  <span><svg class="s22" viewBox="0 0 22 22"><path fill="#8ac5d6" d="M8 1l13 1-3 18-18-3z"/><path fill="#d8eef3" d="M8 1l11 1-5 16L0 16z"/><path fill="#4c9fb2" d="M10 7l7 1-4 10-10-2z"/></svg></span>
  <span><svg class="s26" viewBox="0 0 26 26"><circle cx="20" cy="6" r="3" fill="#5059c9"/><circle cx="13" cy="4.500" r="3.700" fill="#7b83eb"/><path fill="#5059c9" d="M10 9h15v9q-2 6-7 5H8z"/><rect y="6" width="13" height="13" rx="1" fill="#4b53bc"/><path stroke="#fff" stroke-width="1.700" d="M3.500 9.500h6M6.500 9v7"/><circle cx="19" cy="19" r="7" fill="#c4122f"/><path stroke="#fff" stroke-width="2" d="M16 19h6"/></svg></span>
  <div class="tray">
    <svg class="s24 help" viewBox="0 0 24 24"><circle cx="11.500" cy="11.500" r="10" fill="#1397d5" stroke="#fff" stroke-width="2.200"/><path fill="none" stroke="#fff" stroke-width="2.600" d="M8 9q0-3.500 3.700-3.500T15.500 9q0 2-3.700 4v2M11.800 16.500v2.200"/><circle cx="19.500" cy="18.500" r="4.500" fill="#f6a81a"/><path stroke="#fff" stroke-width="1.400" d="M19.500 16v5"/></svg>
    <svg class="s24 wx" viewBox="0 0 24 24"><path fill="url(#gMoon)" d="M2 14q10 5 15-6 5 2 5 7-2 8-10 8T2 14z"/><path fill="#a9c8f5" d="M3 10a3 3 0 0 1 0-6q2-4 6-2 2 0 3 3 3 1 1 5z"/><circle cx="18" cy="6" r="6" fill="#c42b1c"/><path fill="none" stroke="#fff" stroke-width="1.300" d="M19 9.500V3l-3.500 4.500h5"/></svg>
    <span class="temp">27°C</span><span class="ar" dir="rtl">صافٍ غالبًا</span>
    <svg class="ic s12" viewBox="0 0 12 12"><path stroke-width="1.200" d="M.5 8.500L6 3l5.500 5.500"/></svg>
    <svg class="ic s16" viewBox="0 0 16 16"><rect x="5" y="0" width="6" height="11" rx="1" fill="#fff" stroke="none"/><path stroke-width="1.200" d="M3 9v3h10V9M8 12v3M5 15.300h6"/></svg>
    <svg class="ic s14" viewBox="0 0 14 14"><path stroke-width="1.100" d="M1 13Q1 1.500 13 1.500M4 13q0-8 9-8M7 13q0-4.500 6-4.500M10 13q0-1.500 2.500-1.500"/></svg>
    <svg class="ic s16" viewBox="0 0 16 16"><path stroke-width="1.200" d="M5 4h10v8H6M15 6.500h1v3h-1M1 2v2M4 2v2M.5 4.500h4v2q0 1.500-2 1.500t-2-1.500zM2.500 8v4"/><path fill="#fff" stroke="none" d="M7 6h6v4.500H7z"/></svg>
    <span class="eng">ENG</span>
    <div class="clock"><span>9:06 PM</span><span>22/09/2025</span></div>
    <svg class="s16 note" viewBox="0 0 16 16"><path fill="#fff" d="M0 0h16v12H9l-4 3.500V12H0z"/><path stroke="#1b2742" d="M2.500 3h11M2.500 5.500h11M2.500 8h7"/><path fill="#1b2742" stroke="#fff" d="M14 8a4 4 0 1 1-5 5q4 1 5-5z"/></svg>
    <i class="peek"></i>
  </div>
</footer>
</body>
</html>
```
FILE: styles.css
```css
* { box-sizing: border-box; }
body { margin: 0; width: 1600px; height: 900px; overflow: hidden; border: 3px solid #f00; background: #14181b; font: 10px Roboto, "Liberation Sans", sans-serif; color: #fff; display: flex; flex-direction: column; }
.defs { position: absolute; }
i, em { font-style: normal; }
u { text-decoration: none; }
svg { display: block; flex: none; }
span, b, small, a { white-space: nowrap; }
.ic { fill: none; stroke: currentColor; stroke-width: 2; }
.w2 { stroke-width: 2; } .w25 { stroke-width: 2.500; } .w3 { stroke-width: 3; }
.s8 { width: 8px; height: 8px; } .s9 { width: 9px; height: 9px; } .s10 { width: 10px; height: 10px; }
.s11 { width: 11px; height: 11px; } .s12 { width: 12px; height: 12px; } .s13 { width: 13px; height: 13px; }
.s14 { width: 14px; height: 14px; } .s15 { width: 15px; height: 15px; } .s16 { width: 16px; height: 16px; }
.s18 { width: 18px; height: 18px; } .s20 { width: 20px; height: 20px; } .s22 { width: 22px; height: 22px; }
.s24 { width: 24px; height: 24px; } .s26 { width: 26px; height: 26px; }

/* browser chrome */
.tabs, .toolbar, .marks, .task { font-family: "Noto Sans", "Open Sans", sans-serif; }
.tabs { height: 37px; flex: none; background: #1f2120; display: grid; grid-template-columns: 40px 232px 238px 241px 232px 41px 1fr; color: #c7c7c7; font-size: 12px; }
.tabmenu { width: 28px; height: 28px; margin: 3px 0 0 3px; border-radius: 9px; background: #3a3a3a; display: grid; place-items: center; color: #e3e3e3; }
.tab { display: flex; align-items: center; padding: 0 14px 3px 5px; letter-spacing: -.28px; }
.tab .ttl { flex: 1; margin: 0 8px; }
.t1 .ttl { margin-right: 11px; letter-spacing: 0; font-size: 11.300px; }
.t2, .t3 { position: relative; padding-left: 11px; }
.t2 { padding-right: 13px; } .t3 { padding-right: 16px; }
.t2 .ttl { letter-spacing: -.34px; }
.t3 .ttl { letter-spacing: -.4px; }
.t2::before, .t3::before { content: ""; position: absolute; left: 0; top: 9px; width: 1px; height: 16px; background: #4b4c4b; }
.active { background: #3c3c3c; margin: 3px 0 0; border-radius: 10px 10px 0 0; padding: 0 10px 6px 8px; color: #e3e3e3; position: relative; }
.active::before, .active::after { content: ""; position: absolute; bottom: 0; width: 10px; height: 10px; }
.active::before { left: -10px; background: radial-gradient(circle at 0 0, transparent 9.500px, #3c3c3c 10px); }
.active::after { right: -10px; background: radial-gradient(circle at 100% 0, transparent 9.500px, #3c3c3c 10px); }
.ffbadge { width: 16px; height: 16px; border-radius: 3px; background: #4b39ef; display: grid; place-items: center; }
.newtab { display: grid; place-items: center; padding: 0 1px 3px 0; }
.winctl { display: flex; gap: 35px; justify-content: flex-end; align-items: center; padding: 0 15px 3px 0; color: #fff; }
.toolbar { height: 46px; flex: none; background: #3c3c3c; border-radius: 5px 5px 0 0; display: grid; grid-template-columns: 36px 36px 34px 1182px 9px 106px 20px 119px 1fr; align-items: center; color: #d0d0d0; padding-left: 11px; }
.toolbar .dim { color: #888; }
.omni { height: 34px; border-radius: 17px; background: #282828; display: grid; grid-template-columns: 24px 1fr 32px 31px 33px; align-items: center; padding: 0 7px 0 5px; }
.omni > svg { justify-self: center; }
.site { width: 24px; height: 24px; border-radius: 12px; background: #3c3c3c; display: grid; place-items: center; }
.url { margin: -1px 0 0 8px; font-size: 13.500px; letter-spacing: -.08px; color: #d0d0d0; }
.url b { font-weight: 400; color: #fff; }
.exts { grid-column: 6; height: 34px; border: 1px solid #757575; border-radius: 17px; display: flex; align-items: center; justify-content: space-between; padding: 0 7px 0 8px; }
.vdiv { width: 2px; height: 16px; background: #5b5b5b; justify-self: center; }
.verify { height: 34px; border-radius: 17px; background: #004a77; color: #d3ecff; display: flex; align-items: center; gap: 7px; padding-left: 11px; font-size: 12.500px; letter-spacing: -.45px; }
.ava { width: 18px; height: 18px; border-radius: 9px; background: #c3360b; border: 2px solid #004a77; outline: 1px dashed #8aa7b5; text-align: center; font-size: 9px; line-height: 13px; }
.dots { fill: #d0d0d0; justify-self: center; }
.marks { height: 35px; flex: none; background: #3c3c3c; border-bottom: 1px solid #525252; padding: 0 0 6px 10px; display: grid; align-items: center; grid-template-columns: 20px 25px 69px 84px 76px 104px 63px 154px 119px 120px 93px 81px 154px 265px 15px 30px 1fr; font-size: 12px; color: #c7c7c7; letter-spacing: -.34px; }
.marks .vdiv { margin-left: -4px; }
.bm { display: flex; align-items: center; gap: 6px; }
.wide { gap: 10px; letter-spacing: 0; font-size: 11.600px; }
.wix { width: 16px; height: 16px; background: #fff; color: #111; font-size: 6px; font-weight: 700; text-align: center; line-height: 16px; letter-spacing: 0; }
.steve { width: 14px; height: 14px; margin: 0 1px; border-radius: 3px; background: linear-gradient(135deg, #3fb6f5, #8f9dfa 60%, #d9a8ff); color: #fff; font-size: 8px; font-weight: 700; text-align: center; line-height: 14px; }
.robo { fill: none; }

/* editor shell */
.app { flex: 1; display: flex; flex-direction: column; min-height: 0; letter-spacing: -.25px; }
.top { height: 35px; flex: none; background: #14181b; border-bottom: 1px solid #1b2024; display: grid; grid-template-columns: 33px 97px 27px 582px 146px 1fr; align-items: center; }
.logo { height: 34px; border-right: 1px solid #22282e; display: grid; place-items: center; color: #5b45ff; padding-right: 3px; }
.proj { padding-left: 7px; }
.p1 { display: flex; align-items: center; gap: 4px; height: 13px; }
.p1 b { font-size: 11px; letter-spacing: -.4px; } .p1 span { font-size: 8px; color: #95a1ac; letter-spacing: -.5px; }
.p2 { display: flex; align-items: center; gap: 2px; height: 12px; font-size: 8.500px; color: #95a1ac; letter-spacing: -.35px; }
.cmdk { height: 22px; border: 1px solid #2a3137; border-radius: 6px; display: flex; align-items: center; gap: 3px; padding: 0 9px 0 9px; color: #95a1ac; }
.cmdk .m { margin-left: auto; }
.acts { display: grid; justify-content: end; grid-template-columns: 50px 46px 48px 48px 29px 30px 29px 30px 40px; padding-right: 3px; align-items: center; }
.pill { width: 42px; height: 22px; border: 1px solid #2a3137; border-radius: 11px; display: flex; align-items: center; justify-content: space-between; padding: 0 5px 0 4px; }
.pill i { width: 14px; height: 14px; border-radius: 7px; background: #39d2c0; display: grid; place-items: center; }
.grad { height: 24px; border: 2px solid transparent; border-radius: 12px; background: linear-gradient(#14181b, #14181b) padding-box, linear-gradient(75deg, #ee8b60 35%, #4b39ef 75%) border-box; padding: 0 5px 0 3px; }
.sq { width: 25px; height: 24px; border: 1px solid #2a3137; border-radius: 5px; display: grid; place-items: center; }
.brown { background: #6c4636; border-color: #d8835c; }
.run { width: 40px; height: 24px; border-radius: 5px; background: #4b39ef; display: grid; grid-template-columns: 23px 1px 16px; align-items: center; justify-items: center; padding-left: 1px; }
.run em { width: 1px; height: 20px; background: #3628b8; }
.work { flex: 1; display: grid; grid-template-columns: 33px 186px 7px 1171px 197px; min-height: 0; }

/* rail */
.rail { background: #14181b; border-right: 1px solid #22282e; display: flex; flex-direction: column; align-items: center; color: #95a1ac; padding-right: 4px; }
.rail small { font-size: 8px; height: 13px; line-height: 15px; font-weight: 500; letter-spacing: -.2px; }
.rail > span { width: 25px; height: 25px; flex: none; margin-top: 3px; display: grid; place-items: center; position: relative; }
.rail > small + span { margin-top: 1px; }
.rail .on { background: #4b39ef; border-radius: 5px; color: #fff; }
.rail .con { width: 29px; margin-top: 3px; border-top: 1px solid #2a3137; text-align: center; height: 13px; line-height: 12px; }
.star::before { content: "★"; position: absolute; left: 0; top: -2px; width: 11px; height: 11px; border: 1px solid #e9bd45; border-radius: 6px; background: #14181b; color: #fff; font: 8px/8px "DejaVu Sans", sans-serif; text-align: center; z-index: 1; }

/* page list and widget tree */
.left { background: #14181b; color: #95a1ac; display: flex; flex-direction: column; }
.ptools { height: 36px; background: #1d2428; border-bottom: 1px solid #14181b; display: flex; align-items: center; padding: 0 0 0 8px; }
.seg { display: flex; width: 84px; height: 24px; border-radius: 5px; background: #303842; padding: 1px; margin-right: 9px; }
.seg span { width: 31px; display: grid; place-items: center; }
.seg .on { width: 28px; background: #101213; border-radius: 5px; color: #fff; }
.seg span:last-child { width: 21px; }
.bt { width: 23px; height: 24px; border: 1px solid #303840; border-radius: 5px; margin-right: 5px; display: grid; place-items: center; }
.green { background: #26695f; border-color: #2fb5a4; color: #fff; }
.violet { background: #31298a; border-color: #4034b5; color: #fff; }
.find { height: 25px; background: #1d2428; border-bottom: 1px solid #14181b; display: flex; align-items: center; padding: 0 0 2px 8px; gap: 8px; font-size: 10px; letter-spacing: -.45px; }
.pagelist { height: 148px; background: #1d2428; }
.prow { height: 17px; display: flex; align-items: center; padding-left: 8px; gap: 5px; font-size: 10px; letter-spacing: -.55px; }
.prow b { color: #fff; font-size: 9.500px; letter-spacing: -.5px; }
.prow.grp { height: 18px; padding-left: 5px; }
.prow.sel { height: 18px; padding-left: 13px; background: #2b333b; color: #fff; }
.cnt { width: 10px; height: 10px; border: 1px solid #d5dade; border-radius: 5px; color: #fff; font-size: 7px; line-height: 8px; text-align: center; letter-spacing: 0; }
.hbar { height: 8px; background: #343c48; padding: 2px 0 0 83px; }
.hbar i { display: block; width: 21px; height: 4px; border-radius: 2px; background: #a4afbb; }
.wthead { height: 41px; display: grid; align-items: center; grid-template-columns: 22px 59px 30px 22px 22px 1fr; padding: 3px 0 0 8px; font-size: 10px; font-weight: 500; letter-spacing: -.2px; }
.info { opacity: .6; }
.find.w { height: 25px; border-bottom: 1px solid #1b2024; font-weight: 500; padding-bottom: 0; }
.tree { padding-top: 8px; font-size: 9px; letter-spacing: -.35px; }
.r0, .r1, .r2 { height: 21px; display: grid; align-items: center; grid-template-columns: 18px 126px 19px 10px; padding-left: 7px; }
.kids { margin-left: 6px; border-left: 1px solid #2a3137; height: 65px; }
.r1 { grid-template-columns: 16px 120px 19px 10px; padding-left: 8px; height: 21px; }
.r2 { height: 22px; margin-left: 6px; border-left: 1px solid #2a3137; grid-template-columns: 16px 1fr; padding-left: 8px; }
.tree u { width: 0; border: 2px solid transparent; border-top: 3px solid #95a1ac; border-bottom: 0; justify-self: center; }
.vbar { background: #272e37; padding: 342px 1px 0 2px; }
.vbar i { display: block; width: 4px; height: 21px; border-radius: 2px; background: #95a1ac; }

/* canvas */
.canvas { background: #1f2428; display: grid; grid-template-columns: 334px 1fr 56px; padding: 6px 5px 0 7px; position: relative; }
.ai { position: relative; height: 280px; border: 1px solid #2a3137; border-radius: 7px; background: #14181b; padding: 0 7px 0 6px; box-shadow: 0 1px 5px #0006; }
.aih { height: 43px; padding-bottom: 7px; display: flex; align-items: center; color: #fff; }
.aih .ic:first-child { color: #95a1ac; }
.aih b { font-size: 12px; margin: 0 3px 0 4px; letter-spacing: -.35px; }
.aih sup { font-size: 8.500px; font-weight: 500; color: #95a1ac; margin-bottom: 6px; letter-spacing: -.5px; }
.aih .s11 { margin: 0 3px 0 auto; }
.box { height: 199px; border: 1px solid #2d353c; border-radius: 5px; padding: 9px 10px 0 11px; }
.prompt { height: 116px; overflow: hidden; font-size: 10.500px; line-height: 12.650px; font-weight: 500; letter-spacing: -.08px; white-space: nowrap; color: #f3f5f7; }
.chars { margin-top: 13px; height: 12px; line-height: 12px; font-size: 8px; color: #95a1ac; letter-spacing: 0; }
.brow { margin-top: 13px; display: flex; align-items: center; }
.brow > span { width: 22px; height: 22px; display: grid; place-items: center; border-radius: 5px; }
.brow .add { width: 21px; background: #1d2428; border: 1px solid #2d353c; }
.brow .ring { margin-left: auto; margin-right: 5px; }
.ring text { font: 700 8px Roboto, sans-serif; fill: #fff; }
.brow .send { background: #3e2eb8; }
.kinds { margin-top: 6px; display: flex; gap: 8px; font-size: 10px; color: #95a1ac; letter-spacing: -.1px; }
.kinds span { height: 22px; width: 66px; border: 1px solid #2d353c; border-radius: 5px; text-align: center; line-height: 20px; }
.kinds .on { width: 39px; background: #241f5e; border: 2px solid #4b39ef; line-height: 18px; }
.tip { position: absolute; left: 263px; top: 236px; width: 79px; height: 25px; border-radius: 5px; background: #2b333a; text-align: center; line-height: 25px; font-weight: 500; font-size: 10px; letter-spacing: -.3px; z-index: 2; }
.tip::before { content: ""; position: absolute; left: 34px; top: -5px; border: 6px solid transparent; border-bottom: 6px solid #2b333a; border-top: 0; }
.stage { display: flex; flex-direction: column; padding-left: 127px; }
.device { width: 135px; height: 28px; margin-left: 72px; border: 1px solid #2a3137; border-radius: 6px; background: #14181b; display: flex; align-items: center; color: #95a1ac; padding-left: 1px; }
.device span { width: 24px; height: 24px; display: grid; place-items: center; border-radius: 5px; }
.device .on { background: #2b333b; color: #fff; }
.device div { margin-left: 5px; width: 40px; line-height: 12px; }
.device small, .device b { display: block; font-size: 8px; letter-spacing: -.3px; }
.device b { color: #fff; font-size: 8.500px; }
.mock { margin-top: 63px; display: flex; gap: 10px; }
.screen { width: 235px; height: 511px; border-radius: 4px; overflow: hidden; background: #f1f4f8; }
.bar { height: 69px; background: #4b39ef; padding: 43px 0 0 9px; font: 700 13px/17px Roboto, sans-serif; letter-spacing: 0; border-bottom: 1px solid #7a6ef0; }
.drop { padding-top: 171px; display: flex; flex-direction: column; align-items: center; color: #57636c; }
.drop span { width: 36px; height: 36px; border: 2px solid #57636c; border-radius: 8px; display: grid; place-items: center; }
.drop p { margin: 19px 0 0; text-align: center; font-size: 11px; line-height: 13px; letter-spacing: -.2px; }
.side { display: flex; flex-direction: column; justify-content: space-between; }
.side span { width: 20px; height: 20px; border-radius: 5px; background: #2b333b; display: grid; place-items: center; }
.corner { display: flex; justify-content: flex-end; gap: 4px; padding-top: 2px; color: #95a1ac; }
.corner span { width: 25px; height: 25px; border-radius: 5px; background: #14181b; display: grid; place-items: center; }

/* properties */
.right { background: #14181b; display: flex; flex-direction: column; position: relative; color: #95a1ac; }
.srow { height: 27px; flex: none; background: #1d2428; border-bottom: 1px solid #2a3138; display: flex; align-items: center; gap: 6px; padding: 2px 6px 0 10px; font-size: 10px; font-weight: 600; letter-spacing: -.3px; }
.srow:nth-child(3) { height: 29px; padding-top: 0; }
.srow .s8 { opacity: .6; }
.e { margin-left: auto; }
.props { padding: 0 5px 0 8px; letter-spacing: -.3px; }
.props b { color: #fff; font-weight: 700; font-size: 9.500px; letter-spacing: -.45px; }
.inf { opacity: .7; }
.scaf { height: 22px; display: flex; align-items: center; gap: 6px; color: #fff; }
.name { display: flex; gap: 5px; color: #fff; }
.name span { width: 130px; height: 22px; border: 1px solid #2a3137; border-radius: 5px; background: #0b0e11; line-height: 20px; padding-left: 7px; font-weight: 500; }
.name i { width: 22px; height: 22px; border: 1px solid #2a3137; border-radius: 5px; background: #1b2125; display: grid; place-items: center; }
.desc { margin-top: 7px; height: 27px; border: 1px solid #2a3137; border-radius: 5px; background: #0b0e11; line-height: 25px; padding-left: 10px; color: #5e6870; font-size: 10px; letter-spacing: -.42px; }
.ptabs { margin-top: 7px; height: 24px; border-radius: 5px; background: #1d2428; display: grid; grid-template-columns: repeat(5, 1fr); padding: 1px; }
.ptabs span { display: grid; place-items: center; }
.ptabs .on { background: #101213; border-radius: 5px; color: #fff; }
.h, .l, .t { display: flex; align-items: center; gap: 3px; }
.l .or { margin-left: 1px; }
.or { color: #c8714c; }
.vis { margin-top: 7px; height: 16px; }
.op { height: 17px; }
.slide { display: flex; align-items: center; height: 22px; }
.slide em { width: 108px; height: 3px; border-radius: 2px; background: #4b39ef; margin: 0 10px 0 4px; }
.slide em i { display: block; width: 8px; height: 8px; border-radius: 4px; background: #fff; margin: -2.500px 0 0 104px; }
.slide span { width: 62px; height: 22px; border: 1px solid #2a3137; border-radius: 5px; background: #0f1316; color: #fff; font-weight: 600; line-height: 20px; padding-left: 8px; }
.anim { height: 29px; padding-bottom: 1px; }
.h u, .t u { margin-left: auto; flex: none; width: 28px; height: 16px; border: 1px solid #252b31; border-radius: 8px; }
.h u::before, .t u::before { content: ""; display: block; width: 14px; height: 14px; border-radius: 7px; background: #2b333b; }
.t u.on { background: #4b43e5; border-color: #4b43e5; }
.t u.on::before { margin-left: 12px; background: #fff; }
.t u.off { opacity: .7; }
hr { margin: 0 -5px 0 -8px; border: 0; height: 1px; background: #2a3137; }
.pg { height: 25px; }
.bg { height: 9px; }
.props .chip { margin: 3px 0 2px; width: 88px; height: 22px; border: 1px solid #2a3137; border-radius: 5px; display: flex; align-items: center; padding: 0 5px 0 5px; }
.chip i { width: 8px; height: 8px; border-radius: 2px; background: #fff; }
.props .chip b { font-size: 8.500px; line-height: 9.500px; margin: 0 auto 0 8px; letter-spacing: -.25px; font-weight: 600; }
.t { height: 22.700px; }
.t span, .l span { font-size: 9.800px; letter-spacing: -.6px; }
.l .s8 { margin-left: 1px; }
.t .s8 { margin-left: 1px; }
.h2 { margin-top: 3px; }
.nav { height: 23px; padding-top: 2px; }
.nav + .t { height: 20px; }
.nav + .t + .t { height: 25px; }
.fab { position: absolute; left: 155px; bottom: 13px; width: 32px; height: 32px; border-radius: 16px; background: #4b39ef; color: #fff; display: grid; place-items: center; }

/* task bar */
.task { height: 37px; flex: none; background: linear-gradient(90deg, #23383f, #22363f 45%, #1e2f40 70%, #1b2542); display: grid; grid-template-columns: 42px 54px 20px 48px 49px 49px 49px 49px 49px 49px 49px 49px 49px 49px 1fr; color: #fff; }
.task > span { display: grid; place-items: center; }
.task > .grip { width: 4px; height: 16px; margin-left: 3px; align-self: center; border: solid #52656d; border-width: 0 1px; }
.cur { background: #4b6069; }
.tray { display: grid; align-items: center; grid-template-columns: 86px 33px 39px 82px 22px 27px 22px 25px 30px 73px 26px 1fr; margin-left: auto; width: 487px; }
.temp, .ar { font-size: 14px; letter-spacing: -.6px; }
.ar { letter-spacing: 0; justify-self: start; }
.eng { font-size: 12px; letter-spacing: -.4px; }
.clock { display: flex; flex-direction: column; align-items: center; font-size: 12px; line-height: 17.500px; letter-spacing: -.62px; padding-top: 1px; }
.note { justify-self: end; }
.peek { width: 1px; height: 37px; background: #7d8698; justify-self: end; margin-right: 1px; }
```
